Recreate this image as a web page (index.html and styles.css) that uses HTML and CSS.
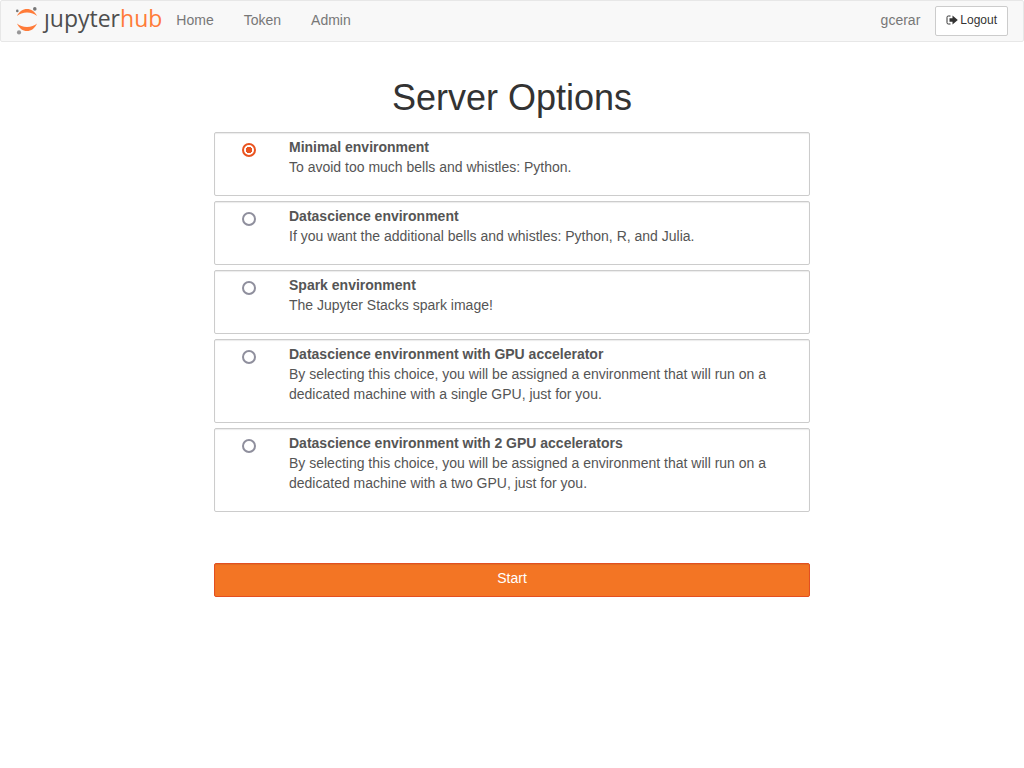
FILE: index.html
```html
<!DOCTYPE html>
<html lang="en">
<head>
<meta charset="utf-8">
<meta name="viewport" content="width=device-width, initial-scale=1">
<title>JupyterHub</title>
<link rel="stylesheet" href="styles.css">
</head>
<body>
<nav class="navbar">
  <a class="logo" href="#" aria-label="JupyterHub">
    <svg class="logo-mark" viewBox="1 1 24 30" aria-hidden="true">
      <path class="moon" d="M2 11C4.300 6.300 7.800 4 12 4s7.700 2.300 10 7C19.500 8.700 16 7.500 12 7.500S4.500 8.700 2 11Z"/>
      <path class="moon" d="M2 18.500C4.300 23.500 7.800 26 12 26s7.700-2.500 10-7.500C19.500 20.700 16 22 12 22S4.500 20.700 2 18.500Z"/>
      <circle class="dot" cx="2.300" cy="5.900" r="1.300"/>
      <circle class="dot" cx="19.800" cy="3.900" r="1.800"/>
      <circle class="dot light" cx="4" cy="27.400" r="2.100"/>
    </svg>
    <span class="wordmark">ȷupyter<span class="hub">hub</span></span>
  </a>
  <ul class="menu">
    <li><a href="#">Home</a></li>
    <li><a href="#">Token</a></li>
    <li><a href="#">Admin</a></li>
  </ul>
  <div class="account">
    <span class="user">gcerar</span>
    <a class="logout" href="#">
      <svg class="logout-icon" viewBox="0 0 12 10" aria-hidden="true">
        <path class="door" d="M4.500 1H2.300Q1 1 1 2.300V7.700Q1 9 2.300 9H4.500"/>
        <path class="arrow" d="M3.500 3.300H6.500V.5L11.800 5L6.500 9.500V6.700H3.500Z"/>
      </svg>
      Logout
    </a>
  </div>
</nav>
<main class="page">
  <h1 class="title">Server Options</h1>
  <form>
    <div class="options">
      <label class="option">
        <input class="radio" type="radio" name="profile" checked>
        <span class="text"><strong>Minimal environment</strong><span>To avoid too much bells and whistles: Python.</span></span>
      </label>
      <label class="option">
        <input class="radio" type="radio" name="profile">
        <span class="text"><strong>Datascience environment</strong><span>If you want the additional bells and whistles: Python, R, and Julia.</span></span>
      </label>
      <label class="option">
        <input class="radio" type="radio" name="profile">
        <span class="text"><strong>Spark environment</strong><span>The Jupyter Stacks spark image!</span></span>
      </label>
      <label class="option">
        <input class="radio" type="radio" name="profile">
        <span class="text"><strong>Datascience environment with GPU accelerator</strong><span>By selecting this choice, you will be assigned a environment that will run on a dedicated machine with a single GPU, just for you.</span></span>
      </label>
      <label class="option">
        <input class="radio" type="radio" name="profile">
        <span class="text"><strong>Datascience environment with 2 GPU accelerators</strong><span>By selecting this choice, you will be assigned a environment that will run on a dedicated machine with a two GPU, just for you.</span></span>
      </label>
    </div>
    <button class="start" type="submit">Start</button>
  </form>
</main>
</body>
</html>
```
FILE: styles.css
```css
* { box-sizing: border-box; }
body {
  margin: 0;
  background: #fff;
  color: #333;
  font: 14px/20px "Helvetica Neue", Helvetica, "Liberation Sans", Arial, sans-serif;
}
a { color: inherit; text-decoration: none; }
.navbar {
  display: flex;
  align-items: center;
  min-height: 42px;
  padding: 0 15px;
  background: #f8f8f8;
  border: 1px solid #e7e7e7;
  border-radius: 2px;
  color: #777;
}
.logo { display: flex; align-items: center; }
.logo-mark { width: 24px; height: 30px; margin-right: 4px; }
.moon { fill: #ff7b39; }
.dot { fill: #767677; }
.dot.light { fill: #989798; }
.wordmark {
  padding-bottom: 6px;
  color: #4e4e4e;
  font: 500 23px/30px "Open Sans", "Noto Sans", sans-serif;
}
.hub { color: #ff7b39; }
.menu {
  display: flex;
  gap: 30px;
  margin: 0;
  padding: 0 0 2px 14px;
  list-style: none;
}
.account { display: flex; align-items: center; gap: 15px; margin-left: auto; }
.user { padding-bottom: 2px; }
.logout {
  display: flex;
  align-items: center;
  gap: 2px;
  height: 30px;
  padding: 0 10px 2px;
  border: 1px solid #ccc;
  border-radius: 2px;
  background: #fff;
  color: #333;
  font-size: 12px;
}
.logout-icon { width: 12px; height: 10px; }
.door { fill: none; stroke: #333; stroke-width: 1; }
.arrow { fill: #333; }
.page { max-width: 628px; margin: 0 auto; padding: 36px 16px; }
.title {
  margin: 0 0 14px;
  font-size: 36px;
  font-weight: 500;
  line-height: 40px;
  text-align: center;
}
.options { display: grid; gap: 5px; margin-bottom: 51px; }
.option {
  display: flex;
  align-items: flex-start;
  padding: 4px 12px 18px 27px;
  border: 1px solid #ccc;
  border-radius: 2px;
  box-shadow: inset 0 1px 1px rgba(0, 0, 0, .08);
  color: #555;
}
.radio {
  flex: none;
  appearance: none;
  width: 14px;
  height: 14px;
  margin: 6px 33px 0 0;
  border: 2px solid #8f8f9d;
  border-radius: 50%;
  background: #fff;
}
.radio:checked {
  border-color: #e95420;
  background: radial-gradient(circle, #e95420 0 3px, #fff 3px);
}
.text { display: flex; flex-direction: column; }
.start {
  display: block;
  width: 100%;
  height: 34px;
  padding: 0 12px 4px;
  border: 1px solid #e34f21;
  border-radius: 2px;
  background: #f37524;
  box-shadow: inset 0 1px 1px rgba(0, 0, 0, .08);
  color: #fff;
  font: inherit;
}
```
